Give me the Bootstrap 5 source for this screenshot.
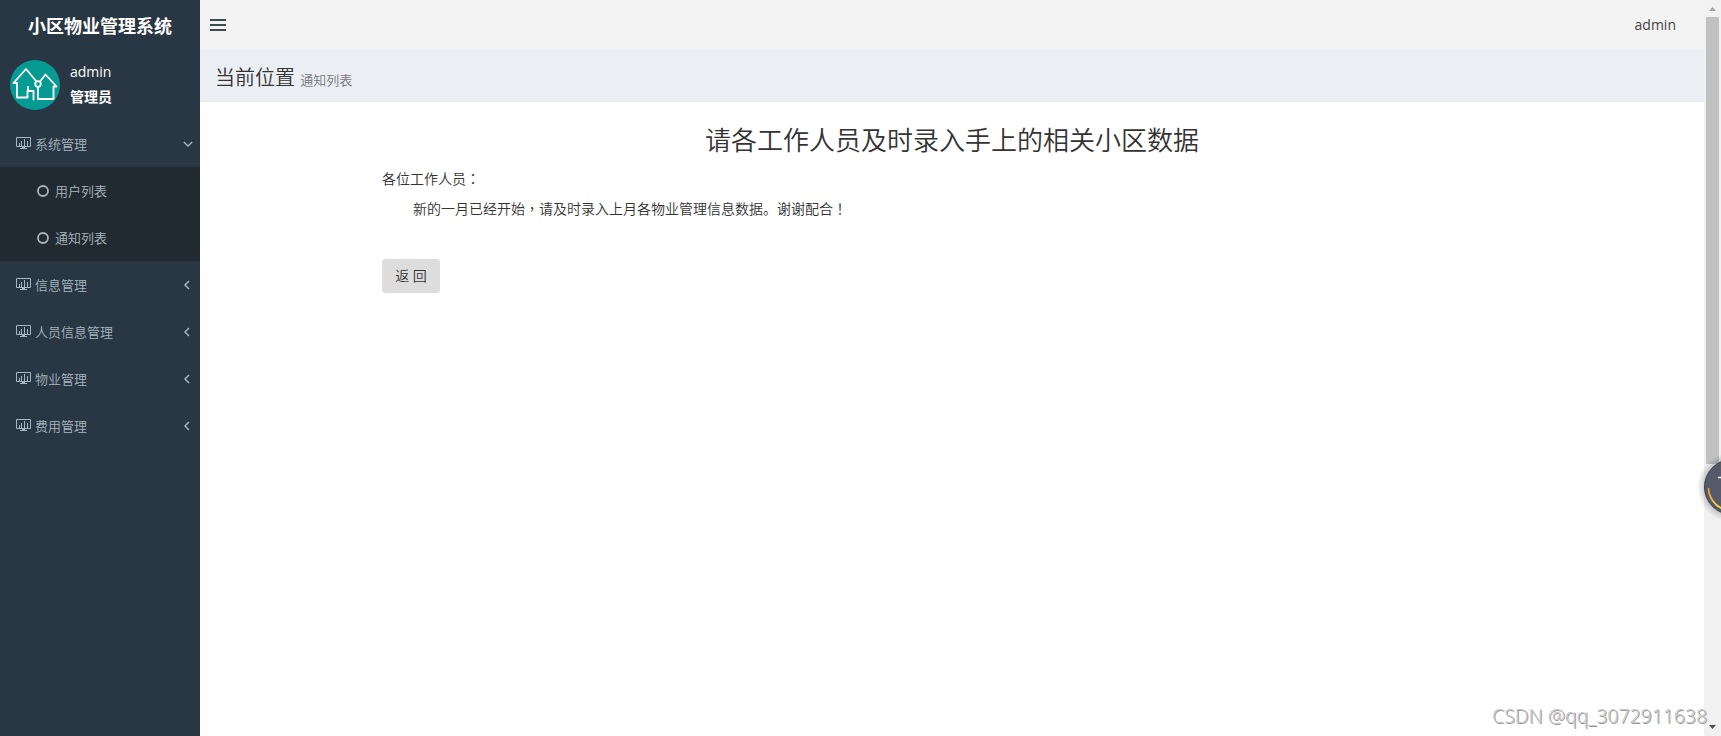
<!DOCTYPE html>
<html lang="zh-CN">
<head>
  <meta charset="UTF-8">
  <meta name="viewport" content="width=device-width, initial-scale=1">
  <title>小区物业管理系统</title>
  <link href="https://cdn.jsdelivr.net/npm/bootstrap@5.3.0/dist/css/bootstrap.min.css" rel="stylesheet">

  <style>
    /* Global Styles */
    body {
      font-family: "Open Sans", "Noto Sans CJK SC", sans-serif;
      font-size: 14px;
      line-height: 20px;
      color: #333;
    }

    /* Sidebar */
    .sidebar {
      width: 200px;
      background: #293643;
      color: #fff;
    }
    .brand-title {
      height: 50px;
      padding-top: 1px;
      font-size: 18px;
      font-weight: 700;
    }
    .user-panel {
      height: 70px;
      padding: 10px;
      gap: 10px;
    }
    .user-info {
      margin-top: -1px;
      line-height: 25px;
    }
    .user-info strong { display: block; }
    .menu-link {
      height: 47px;
      padding: 0 8px 0 16px;
      font-size: 13px;
      font-weight: 350;
      color: #a7b6bf;
    }
    .menu-link:hover { color: #fff; }
    .menu-link svg:first-child { margin-right: 4px; }
    .menu-link .arrow-down { margin-right: -1px; }
    .sub-menu { background: #222a31; }
    .sub-menu .menu-link { padding-left: 37px; }
    .sub-menu .menu-link svg:first-child { margin-right: 6px; }

    /* Main area */
    .top-bar {
      height: 50px;
      padding: 0 28px 0 10px;
      background: #f3f3f3;
      color: #444;
    }
    .page-header {
      height: 52px;
      padding: 3px 15px 0;
      background: #ebeef3;
    }
    .page-header h1 {
      font-size: 20px;
      font-weight: 350;
    }
    .page-header h1 span {
      font-size: 13px;
      color: #777;
    }
    .notice {
      width: 1140px;
      margin-left: 182px;
      padding-top: 20px;
      font-weight: 350;
    }
    .notice h2 {
      font-size: 26px;
      font-weight: 350;
      line-height: 36px;
      margin-bottom: 10px;
    }
    .notice p {
      height: 20px;
      margin-bottom: 10px;
    }
    .indent { text-indent: 31px; }
    .mid { font-family: "Noto Sans CJK TC", sans-serif; }
    .btn-back {
      width: 58px;
      height: 34px;
      padding: 0 0 2px;
      margin-top: 31px;
      font-size: 14px;
      font-weight: 350;
      border: 0;
      border-radius: 4px;
      background: #ddd;
      color: #333;
    }

    /* Scrollbar */
    .scroll-track {
      width: 17px;
      background: #f1f1f1;
    }
    .scroll-thumb {
      width: 13px;
      height: 447px;
      background: #c1c1c1;
    }

    /* Overlays */
    .float-ball {
      right: 0;
      top: 451px;
    }
    .watermark {
      right: 14px;
      bottom: 6px;
      font-family: "Noto Sans", sans-serif;
      font-size: 19.4px;
      font-weight: 300;
      line-height: 28px;
      color: #c8c8c8;
      text-shadow: 1px 1px 0 #999;
    }
  </style>
</head>
<body>
  <svg class="d-none">
    <symbol id="icon-chart" viewBox="0 0 15 13">
      <path d="M.5 .5h14v9H.5z" fill="none" stroke="currentColor"/>
      <path d="M3 6h1v3H3zM5 4h1v5H5zM8 2h1v7H8zM11 4h1v5h-1zM6 10h3v1H6zM4 11h7v1H4z" fill="currentColor"/>
    </symbol>
    <symbol id="icon-circle" viewBox="0 0 12 12">
      <circle cx="6" cy="6" r="5" fill="none" stroke="currentColor" stroke-width="1.8"/>
    </symbol>
    <symbol id="icon-left" viewBox="0 0 10 10">
      <path d="M7 1 3 5l4 4" fill="none" stroke="currentColor" stroke-width="1.5"/>
    </symbol>
    <symbol id="icon-down" viewBox="0 0 10 10">
      <path d="M.8 3 5 7l4.200-4" fill="none" stroke="currentColor" stroke-width="1.4"/>
    </symbol>
  </svg>

  <div class="d-flex vh-100 position-relative overflow-hidden">
    <!-- Sidebar -->
    <aside class="sidebar flex-shrink-0">
      <div class="brand-title d-flex align-items-center justify-content-center">小区物业管理系统</div>
      <div class="user-panel d-flex">
        <svg width="50" height="50" viewBox="0 0 50 50">
          <circle cx="25" cy="25" r="25" fill="#059a92"/>
          <g fill="none" stroke="#fff" stroke-width="1.8" stroke-linejoin="round" stroke-linecap="round">
            <path d="M26.500 21.500 16 9 3.500 23H7v14.500h10.500V31h6v8.500"/>
            <path d="M18 27v4M30 21.500 35.500 14.500 46.500 26.500h-3v12.500H28V27"/>
            <circle cx="28" cy="24" r="2.800"/>
          </g>
        </svg>
        <div class="user-info">admin<strong>管理员</strong></div>
      </div>

      <ul class="list-unstyled mb-0">
        <li>
          <a class="menu-link d-flex align-items-center text-decoration-none" href="#">
            <svg width="15" height="13"><use href="#icon-chart"/></svg>系统管理
            <svg class="arrow-down ms-auto" width="10" height="10"><use href="#icon-down"/></svg>
          </a>
          <ul class="sub-menu list-unstyled">
            <li><a class="menu-link d-flex align-items-center text-decoration-none" href="#"><svg width="12" height="12"><use href="#icon-circle"/></svg>用户列表</a></li>
            <li><a class="menu-link d-flex align-items-center text-decoration-none" href="#"><svg width="12" height="12"><use href="#icon-circle"/></svg>通知列表</a></li>
          </ul>
        </li>
        <li>
          <a class="menu-link d-flex align-items-center text-decoration-none" href="#">
            <svg width="15" height="13"><use href="#icon-chart"/></svg>信息管理
            <svg class="ms-auto" width="10" height="10"><use href="#icon-left"/></svg>
          </a>
        </li>
        <li>
          <a class="menu-link d-flex align-items-center text-decoration-none" href="#">
            <svg width="15" height="13"><use href="#icon-chart"/></svg>人员信息管理
            <svg class="ms-auto" width="10" height="10"><use href="#icon-left"/></svg>
          </a>
        </li>
        <li>
          <a class="menu-link d-flex align-items-center text-decoration-none" href="#">
            <svg width="15" height="13"><use href="#icon-chart"/></svg>物业管理
            <svg class="ms-auto" width="10" height="10"><use href="#icon-left"/></svg>
          </a>
        </li>
        <li>
          <a class="menu-link d-flex align-items-center text-decoration-none" href="#">
            <svg width="15" height="13"><use href="#icon-chart"/></svg>费用管理
            <svg class="ms-auto" width="10" height="10"><use href="#icon-left"/></svg>
          </a>
        </li>
      </ul>
    </aside>

    <!-- Main -->
    <main class="flex-grow-1 bg-white">
      <nav class="top-bar d-flex align-items-center justify-content-between">
        <svg width="16" height="12" viewBox="0 0 16 12"><path d="M0 1h16M0 6h16M0 11h16" stroke="#3d4b4c" stroke-width="1.8"/></svg>
        <span>admin</span>
      </nav>
      <header class="page-header d-flex align-items-center">
        <h1 class="m-0">当前位置 <span>通知列表</span></h1>
      </header>
      <section class="notice">
        <h2 class="text-center">请各工作人员及时录入手上的相关小区数据</h2>
        <p>各位工作人员<span class="mid" lang="zh-TW">：</span></p>
        <p class="indent">新的一月已经开始<span class="mid" lang="zh-TW">，</span>请及时录入上月各物业管理信息数据。谢谢配合<span class="mid" lang="zh-TW">！</span></p>
        <button type="button" class="btn btn-back">返 回</button>
      </section>
    </main>

    <!-- Scrollbar -->
    <div class="scroll-track d-flex flex-column align-items-center flex-shrink-0">
      <svg class="flex-shrink-0" width="17" height="17"><path d="M5 11l3.500-4 3.500 4z" fill="#a3a3a3"/></svg>
      <div class="scroll-thumb"></div>
      <svg class="mt-auto flex-shrink-0" width="17" height="17"><path d="M5 6h7l-3.500 4z" fill="#505050"/></svg>
    </div>

    <!-- Floating ball -->
    <svg class="float-ball position-absolute" width="27" height="72" viewBox="0 0 27 72">
      <defs>
        <radialGradient id="halo"><stop offset=".78" stop-color="#000" stop-opacity=".2"/><stop offset="1" stop-color="#000" stop-opacity="0"/></radialGradient>
        <linearGradient id="arc" x1="0" y1="0" x2="0" y2="1"><stop offset="0" stop-color="#e58a3c"/><stop offset="1" stop-color="#ffe02e"/></linearGradient>
      </defs>
      <circle cx="38" cy="36" r="35" fill="url(#halo)"/>
      <circle cx="38" cy="36" r="27.500" fill="#555a6b" stroke="#3c404d"/>
      <path d="M14.500 37a23.500 23.500 0 0 0 13.500 20.500" fill="none" stroke="url(#arc)" stroke-width="1.800"/>
      <path d="M24 26.500h3" stroke="#fff" stroke-width="1.500"/>
    </svg>

    <div class="watermark position-absolute">CSDN @qq_3072911638</div>
  </div>

  <script src="https://cdn.jsdelivr.net/npm/bootstrap@5.3.0/dist/js/bootstrap.bundle.min.js"></script>
</body>
</html>
